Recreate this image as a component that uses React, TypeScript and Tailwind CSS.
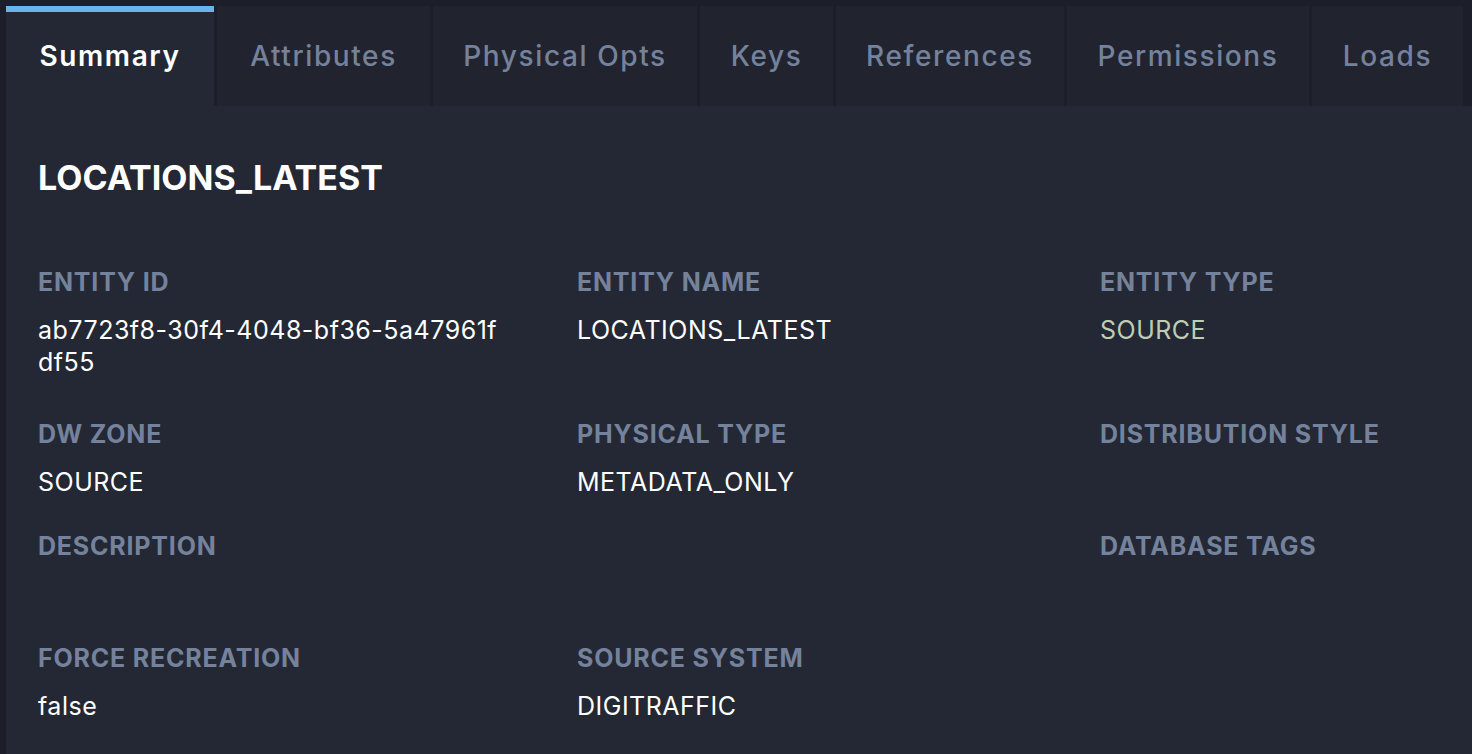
const tabs = [
  { label: "Summary", width: "w-[208px]", active: true },
  { label: "Attributes", width: "w-[213px]" },
  { label: "Physical Opts", width: "w-[264px]" },
  { label: "Keys", width: "w-[133px]" },
  { label: "References", width: "w-[228px]" },
  { label: "Permissions", width: "w-[242px]" },
  { label: "Loads", width: "w-[151px]" },
];

const Field = ({
  label,
  value,
  valueClass = "text-white",
  className = "",
}: {
  label: string;
  value?: string;
  valueClass?: string;
  className?: string;
}) => (
  <div className={`flex flex-col gap-4 ${className}`}>
    <div className="text-[25px] font-bold leading-8 tracking-[0.8px] text-[#75829c]">
      {label}
    </div>
    <div className={`min-h-8 text-[25px] leading-8 tracking-[0.5px] ${valueClass}`}>
      {value}
    </div>
  </div>
);

const App = () => {
  return (
    <div
      className="min-h-screen bg-[#1c1e29] pl-[6px] pt-[6px]"
      style={{ fontFamily: "Inter, 'Noto Sans', sans-serif" }}
    >
      {/* tab bar */}
      <div className="flex gap-[3px]">
        {tabs.map((tab) => (
          <div
            key={tab.label}
            className={`flex h-[100px] items-center justify-center text-[28px] tracking-[1.6px] ${tab.width} ${
              tab.active
                ? "border-t-[6px] border-[#6ab4ee] bg-[#242834] pb-[6px] font-semibold text-white"
                : "bg-[#21242f] font-medium text-[#75829c]"
            }`}
          >
            {tab.label}
          </div>
        ))}
      </div>

      {/* summary panel */}
      <div className="h-[648px] bg-[#242834] px-8 pt-[52px]">
        <h1 className="text-[34px] font-bold leading-10 text-white">
          LOCATIONS_LATEST
        </h1>

        <div className="mt-[68px] grid grid-cols-[539px_523px_1fr] gap-y-8">
          <Field
            label="ENTITY ID"
            value="ab7723f8-30f4-4048-bf36-5a47961fdf55"
            valueClass="w-[466px] break-all text-white"
            className="pb-2"
          />
          <Field label="ENTITY NAME" value="LOCATIONS_LATEST" className="pb-2" />
          <Field
            label="ENTITY TYPE"
            value="SOURCE"
            valueClass="text-[#bfcdb5]"
            className="pb-2"
          />

          <Field label="DW ZONE" value="SOURCE" />
          <Field label="PHYSICAL TYPE" value="METADATA_ONLY" />
          <Field label="DISTRIBUTION STYLE" />

          <Field label="DESCRIPTION" />
          <div />
          <Field label="DATABASE TAGS" />

          <Field label="FORCE RECREATION" value="false" />
          <Field label="SOURCE SYSTEM" value="DIGITRAFFIC" />
        </div>
      </div>
    </div>
  );
};

export default App;
